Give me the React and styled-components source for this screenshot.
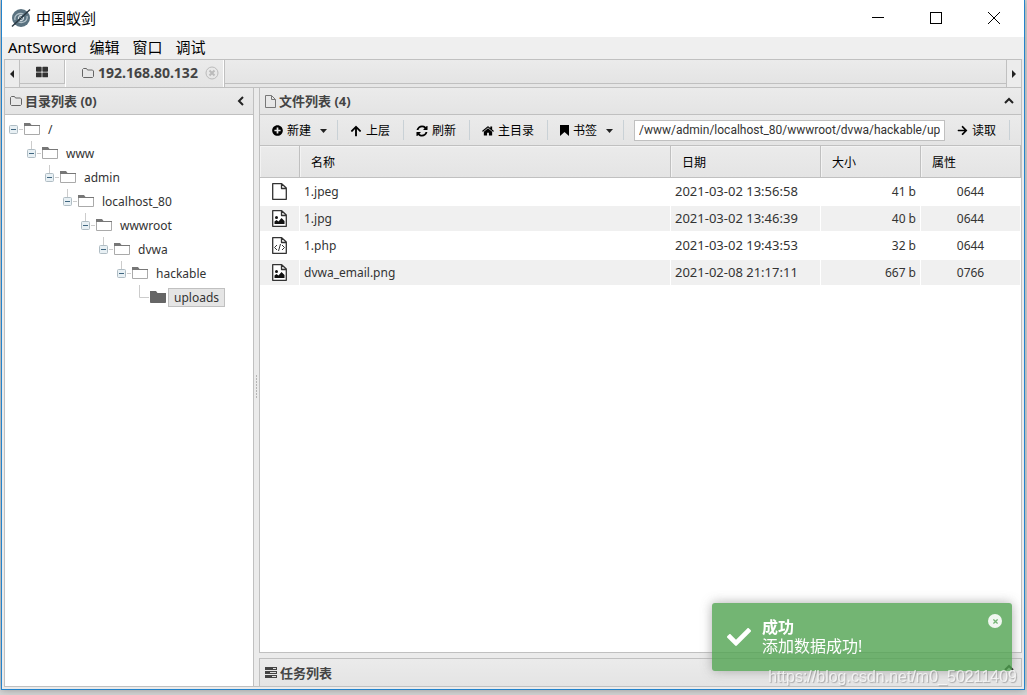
import React, { useState } from 'react';
import styled, { createGlobalStyle, css } from 'styled-components';
import {
  FaThLarge as GridIcon,
  FaPlusCircle as AddIcon,
  FaArrowUp as UpIcon,
  FaArrowRight as GoIcon,
  FaCheck as CheckIcon,
  FaTimes as TimesIcon,
} from 'react-icons/fa';

const line = '#c0c0c0';
const chrome = 'linear-gradient(#ebebeb, #e4e4e4)';
const uiFont = '"Noto Sans", "Noto Sans CJK SC", sans-serif';

const GlobalStyle = createGlobalStyle`
  * { box-sizing: border-box; }

  body {
    margin: 0;
    background: #d6d6d6;
    color: #333;
    font: 12px/16px ${uiFont};
  }

  button, input {
    font: inherit;
    color: inherit;
  }

  button {
    border: 0;
    padding: 0;
    background: none;
  }

  svg { display: block; flex: none; }
`;

const Window = styled.div`
  display: flex;
  flex-direction: column;
  height: calc(100vh - 5px);
  margin: 0 2px 5px 1px;
  border: 1px solid #2383cc;
  border-top: 0;
  background: #ebebeb;
  box-shadow: 0 0 8px rgba(0,0,0,.3);
`;

const TitleBar = styled.header`
  display: flex;
  align-items: center;
  height: 37px;
  padding: 0 1px 2px 9px;
  background: #fff;
  color: #000;
`;

const Title = styled.h1`
  flex: 1;
  margin: 0 0 0 5px;
  font-size: 15px;
  font-weight: 400;
  line-height: 20px;
`;

const WindowButton = styled.button`
  display: flex;
  justify-content: center;
  align-items: center;
  width: 58px;
  height: 35px;
`;

const MenuBar = styled.nav`
  display: flex;
  gap: 13px;
  height: 22px;
  padding: 0 6px 2px;
  background: #efefef;
`;

const MenuButton = styled.button`
  font-size: 15px;
  line-height: 20px;
  color: #000;
`;

const Workspace = styled.div`
  flex: 1;
  min-height: 0;
  display: flex;
  flex-direction: column;
  padding: 0 2px 2px;
`;

const TabBar = styled.div`
  display: flex;
  height: 28px;
  border: 1px solid ${line};
  border-bottom: 0;
  background: #e6e6e6;
`;

const TabArrow = styled.button`
  display: flex;
  justify-content: center;
  align-items: center;
  width: 15px;
  background: #ececec;
  border: 0 solid ${line};
  border-right-width: ${props => props.$side === 'left' ? '1px' : 0};
  border-left-width: ${props => props.$side === 'right' ? '1px' : 0};
`;

const Tabs = styled.div`
  flex: 1;
  display: flex;
`;

const TabFiller = styled.div`
  flex: 1;
  height: 24px;
  border-bottom: 1px solid ${line};
  background: ${chrome};
`;

const HomeTab = styled.button`
  display: flex;
  justify-content: center;
  align-items: center;
  width: 45px;
  height: 24px;
  border: solid ${line};
  border-width: 0 1px 1px 0;
  background: ${chrome};
`;

const ActiveTab = styled.div`
  display: flex;
  align-items: center;
  height: 27px;
  padding: 0 5px 2px 16px;
  border-left: 1px solid #fff;
  border-right: 1px solid ${line};
  box-shadow: inset -1px 0 #fff;
  background: ${chrome};
`;

const TabTitle = styled.button`
  display: flex;
  align-items: center;
  gap: 4px;
  color: #444;
  font-size: 14px;
  font-weight: 700;
`;

const TabClose = styled.button`
  margin-left: 7px;
`;

const Panes = styled.main`
  flex: 1;
  min-height: 0;
  display: grid;
  grid-template-columns: 250px 5px minmax(0, 1fr);
`;

const Panel = styled.section`
  display: flex;
  flex-direction: column;
  min-height: 0;
  flex: ${props => props.$grow ? '1' : 'none'};
  border: 1px solid ${line};
  background: #fff;
`;

const Splitter = styled.div`
  display: flex;
  justify-content: center;
  align-items: center;
  border: solid ${line};
  border-width: 1px 0;
`;

const Grip = styled.div`
  width: 1px;
  height: 24px;
  background: repeating-linear-gradient(#b5b5b5 0 2px, transparent 2px 3px);
`;

const RightColumn = styled.div`
  display: flex;
  flex-direction: column;
  gap: 5px;
  min-height: 0;
`;

const PanelHeader = styled.header`
  display: flex;
  align-items: center;
  gap: 3px;
  height: 27px;
  padding: 0 5px;
  border-bottom: ${props => props.$last ? 0 : '1px'} solid ${line};
  background: ${chrome};
`;

const PanelTitle = styled.h2`
  flex: 1;
  margin: 0;
  color: #444;
  font-size: 13px;
  line-height: 18px;
`;

const CollapseButton = styled.button`
  padding: 2px;
  align-self: ${props => props.$low ? 'flex-start' : 'center'};
`;

const TreeList = styled.ul`
  list-style: none;
  margin: 0;
  padding: 2px 0 0 4px;
`;

const TreeChildren = styled(TreeList)`
  padding: 0 0 0 18px;
`;

const TreeRow = styled.div`
  display: flex;
  align-items: center;
  height: 24px;
`;

const Toggle = styled.button`
  display: flex;
`;

const NodeLabel = styled.button`
  height: 19px;
  margin-left: 2px;
  padding: 1px 5px 0;
  border: 1px solid transparent;

  ${props => props.$selected && css`
    border-color: ${line};
    background: #e5e5e5;
  `}
`;

const Toolbar = styled.div`
  display: flex;
  align-items: center;
  height: 31px;
  padding-right: 11px;
  border-bottom: 1px solid ${line};
  background: ${chrome};
`;

const ToolButton = styled.button`
  display: flex;
  align-items: center;
  gap: 4px;
  height: 19px;
  padding: 1px 13px 0 12px;
  color: #000;

  svg:nth-of-type(2) {
    margin: 0 -3px 0 5px;
  }
`;

const Divider = styled.div`
  width: 1px;
  height: 20px;
  background: #c9d1d6;
`;

const PathInput = styled.input`
  flex: 1;
  min-width: 0;
  height: 21px;
  margin-left: 10px;
  padding: 0 4px;
  border: 1px solid ${line};
  border-radius: 0;
  background: #fff;
  font-family: Roboto, "Noto Sans CJK SC", sans-serif;
`;

const FileTable = styled.table`
  width: 100%;
  table-layout: fixed;
  border-spacing: 0;
`;

const HeadCell = styled.th`
  height: 32px;
  padding: 2px 11px 0;
  border: solid ${line};
  border-width: 0 1px 1px 0;
  box-shadow: inset 1px 1px #f3f3f3;
  background: ${chrome};
  color: #000;
  font-weight: 400;
  text-align: left;
`;

const FileRow = styled.tr`
  background: ${props => props.$odd ? '#f0f0f0' : '#fff'};
`;

const Cell = styled.td`
  height: 27px;
  padding: 0 4px;
  border: solid #fff;
  border-width: 1px 1px 1px 0;
  text-align: ${props => props.$align || 'left'};

  svg { margin: 0 auto; }
`;

const DateCell = styled(Cell)`
  padding-bottom: 2px;
  font-size: 13px;
`;

const Toast = styled.div`
  position: fixed;
  right: 15px;
  bottom: 24px;
  display: flex;
  align-items: flex-start;
  width: 300px;
  padding: 15px 10px 15px 15px;
  border-radius: 3px;
  background: #51a351;
  color: #fff;
  font-size: 16px;
  line-height: 19px;
  opacity: .8;
  box-shadow: 0 0 12px #999;
`;

const ToastIcon = styled.div`
  padding: 7px 11px 0 0;
`;

const ToastText = styled.div`
  flex: 1;
`;

const ToastTitle = styled.div`
  font-weight: 700;
`;

const ToastClose = styled.button`
  display: flex;
  justify-content: center;
  align-items: center;
  width: 14px;
  height: 14px;
  margin-top: -4px;
  border-radius: 50%;
  background: rgba(255,255,255,.9);
  color: #51a351;
`;

const Watermark = styled.div`
  position: fixed;
  right: 10px;
  bottom: 9px;
  color: rgba(255,255,255,.7);
  font: 16px/18px "Liberation Sans", sans-serif;
  text-shadow: 1px 1px 1px rgba(0,0,0,.25);
`;

const Logo = () => (
  <svg width="20" height="20" viewBox="0 0 20 20">
    <circle cx="10" cy="10" r="9" fill="#5a7280" />
    <path d="M4 12C3 7 8 4.500 12.500 6M16 8C17 13 12 15.500 7.500 14" fill="none" stroke="#b4c2c9" strokeWidth="1.300" />
    <path d="M7.500 11C7 8.500 9 7 11 7.500M12.500 9C13 11.500 11 13 9 12.500" fill="none" stroke="#d3dce0" strokeWidth="1.200" />
    <circle cx="10" cy="10" r="1.200" fill="#d3dce0" />
    <path d="M1 18.500L19 1.500" stroke="#293740" strokeWidth="1.400" />
  </svg>
);

const SmallFolder = () => (
  <svg width="12" height="12" viewBox="0 0 12 12" fill="none" stroke="#666">
    <path d="M.5 9.500v-7l1-1h3l1 1.500h5l1 1v5.500l-1 1h-9z" />
  </svg>
);

const SmallFile = () => (
  <svg width="11" height="13" viewBox="0 0 11 13" fill="none" stroke="#777">
    <path d="M.5.500h6l4 4v8H.5zM6.500.500v4h4" />
  </svg>
);

const TreeFolder = ({ filled }) => (
  <svg width="16" height="14" viewBox="0 0 16 14">
    <path d="M.5 3.500h15v9H.5z" fill={filled ? '#666' : '#fff'} stroke={filled ? '#666' : '#aaa'} />
    <path d="M0 4V1h6l1.500 2H16v1z" fill={filled ? '#666' : '#777'} />
  </svg>
);

const Toggler = ({ child }) => (
  <svg width="15" height="24" viewBox="0 0 15 24">
    {child && <path d="M4.500 0v8" stroke="#ccc" />}
    <path d="M10 12.500h4" stroke="#ccc" />
    <rect x="0.500" y="8.500" width="8" height="8" rx="1" fill="#e8f0f4" stroke="#b0bdc4" />
    <path d="M2 12.500h5" stroke="#3f6680" />
  </svg>
);

const LeafLine = () => (
  <svg width="15" height="24" viewBox="0 0 15 24">
    <path d="M4.500 0v12.500h9.500" fill="none" stroke="#ccc" />
  </svg>
);

const Chevron = ({ d }) => (
  <svg width="10" height="10" viewBox="0 0 10 10" fill="none" stroke="#222" strokeWidth="2">
    <path d={d} />
  </svg>
);

const Caret = () => (
  <svg width="7" height="4" viewBox="0 0 7 4"><path d="M0 0h7L3.500 4z" fill="#222" /></svg>
);

const BookmarkIcon = () => (
  <svg width="9" height="11" viewBox="0 0 9 11"><path d="M0 0h9v11L4.500 7 0 11z" /></svg>
);

const RefreshIcon = () => (
  <svg width="12" height="12" viewBox="64 64 1664 1664">
    <path d="M1639 1056q0 5-1 7-64 268-268 434.500t-478 166.500q-146 0-282.500-55t-243.500-157l-129 129q-19 19-45 19t-45-19-19-45v-448q0-26 19-45t45-19h448q26 0 45 19t19 45-19 45l-137 137q71 66 161 102t187 36q134 0 250-65t186-179q11-17 53-117 8-23 30-23h192q13 0 22.500 9.500t9.500 22.500zm25-800v448q0 26-19 45t-45 19h-448q-26 0-45-19t-19-45 19-45l138-138q-148-137-349-137-134 0-250 65t-186 179q-11 17-53 117-8 23-30 23h-199q-13 0-22.500-9.500t-9.500-22.500v-7q65-268 270-434.500t480-166.500q146 0 284 55.500t245 156.500l130-129q19-19 45-19t45 19 19 45z" />
  </svg>
);

const HomeIcon = () => (
  <svg width="12" height="12" viewBox="64 64 1664 1664">
    <path d="M1472 992v480q0 26-19 45t-45 19h-384v-384h-256v384h-384q-26 0-45-19t-19-45v-480q0-1 .5-3t.5-3l575-474 575 474q1 2 1 6zm223-69l-62 74q-8 9-21 11h-3q-13 0-21-7l-692-577-692 577q-12 8-24 7-13-2-21-11l-62-74q-8-10-7-23.500t11-21.500l719-599q32-26 76-26t76 26l244 204v-195q0-14 9-23t23-9h192q14 0 23 9t9 23v408l219 182q10 8 11 21.500t-7 23.500z" />
  </svg>
);

const TasksIcon = () => (
  <svg width="12" height="11" viewBox="0 0 12 11">
    <path d="M0 0h12v3H0zM0 4h12v3H0zM0 8h12v3H0z" fill="#444" />
    <path d="M8 1h3v1H8zM5 5h6v1H5zM7 9h4v1H7z" fill="#ddd" />
  </svg>
);

const fileMarks = {
  image: (
    <>
      <circle cx="4.500" cy="7.500" r="1.500" fill="#111" />
      <path d="M2.500 14v-2.500l2-1.500 2 1.500L9.500 8l3 3v3z" fill="#111" />
    </>
  ),
  code: <path d="M5 8l-2.500 2.500L5 13M10 8l2.500 2.500L10 13M8.500 7l-2 7" fill="none" stroke="#333" />,
};

const FileIcon = ({ kind }) => (
  <svg width="15" height="17" viewBox="0 0 15 17">
    <path d="M.7.700h9L14.300 5v11.300H.7zM9.500.700V5.500h4.800" fill="#fff" stroke="#333" strokeWidth="1.300" strokeLinejoin="round" />
    {fileMarks[kind]}
  </svg>
);

const folders = ['/', 'www', 'admin', 'localhost_80', 'wwwroot', 'dvwa', 'hackable', 'uploads'];

const files = [
  { name: '1.jpeg', date: '2021-03-02 13:56:58', size: '41 b', mode: '0644', kind: 'blank' },
  { name: '1.jpg', date: '2021-03-02 13:46:39', size: '40 b', mode: '0644', kind: 'image' },
  { name: '1.php', date: '2021-03-02 19:43:53', size: '32 b', mode: '0644', kind: 'code' },
  { name: 'dvwa_email.png', date: '2021-02-08 21:17:11', size: '667 b', mode: '0766', kind: 'image' },
];

const TreeNode = ({ depth }) => {
  const leaf = depth === folders.length - 1;

  return (
    <li>
      <TreeRow>
        {
          leaf
            ? <LeafLine />
            : <Toggle aria-label="collapse"><Toggler child={depth > 0} /></Toggle>
        }
        <TreeFolder filled={leaf} />
        <NodeLabel $selected={leaf}>{folders[depth]}</NodeLabel>
      </TreeRow>
      {!leaf && <TreeChildren><TreeNode depth={depth + 1} /></TreeChildren>}
    </li>
  );
};

const App = () => {
  const [path, setPath] = useState('/www/admin/localhost_80/wwwroot/dvwa/hackable/uploads/');
  const [toastOpen, setToastOpen] = useState(true);

  return (
    <>
      <GlobalStyle />
      <Window>
        <TitleBar>
          <Logo />
          <Title>中国蚁剑</Title>
          <WindowButton aria-label="minimize">
            <svg width="12" height="12"><path d="M0 5.500h12" stroke="#000" /></svg>
          </WindowButton>
          <WindowButton aria-label="maximize">
            <svg width="12" height="12"><rect x="0.500" y="0.500" width="11" height="11" fill="none" stroke="#000" /></svg>
          </WindowButton>
          <WindowButton aria-label="close">
            <svg width="12" height="12"><path d="M0 0l12 12M12 0L0 12" stroke="#000" /></svg>
          </WindowButton>
        </TitleBar>
        <MenuBar>
          {['AntSword', '编辑', '窗口', '调试'].map(item => <MenuButton key={item}>{item}</MenuButton>)}
        </MenuBar>
        <Workspace>
          <TabBar>
            <TabArrow $side="left" aria-label="previous">
              <svg width="4" height="8"><path d="M4 0v8L0 4z" fill="#222" /></svg>
            </TabArrow>
            <Tabs>
              <HomeTab aria-label="home"><GridIcon size={12} /></HomeTab>
              <ActiveTab>
                <TabTitle><SmallFolder />192.168.80.132</TabTitle>
                <TabClose aria-label="close tab">
                  <svg width="14" height="14" viewBox="0 0 14 14" fill="none" stroke="#bbb">
                    <circle cx="7" cy="7" r="6" />
                    <path d="M4.500 4.500l5 5M9.500 4.500l-5 5" strokeWidth="2" />
                  </svg>
                </TabClose>
              </ActiveTab>
              <TabFiller />
            </Tabs>
            <TabArrow $side="right" aria-label="next">
              <svg width="4" height="8"><path d="M0 0v8l4-4z" fill="#222" /></svg>
            </TabArrow>
          </TabBar>
          <Panes>
            <Panel>
              <PanelHeader>
                <SmallFolder />
                <PanelTitle>目录列表 (0)</PanelTitle>
                <CollapseButton aria-label="collapse"><Chevron d="M7 1L3 5l4 4" /></CollapseButton>
              </PanelHeader>
              <TreeList><TreeNode depth={0} /></TreeList>
            </Panel>
            <Splitter><Grip /></Splitter>
            <RightColumn>
              <Panel $grow>
                <PanelHeader>
                  <SmallFile />
                  <PanelTitle>文件列表 (4)</PanelTitle>
                  <CollapseButton aria-label="collapse"><Chevron d="M1 7l4-4 4 4" /></CollapseButton>
                </PanelHeader>
                <Toolbar>
                  <ToolButton><AddIcon size={11} />新建<Caret /></ToolButton>
                  <Divider />
                  <ToolButton><UpIcon size={12} />上层</ToolButton>
                  <Divider />
                  <ToolButton><RefreshIcon />刷新</ToolButton>
                  <Divider />
                  <ToolButton><HomeIcon />主目录</ToolButton>
                  <Divider />
                  <ToolButton><BookmarkIcon />书签<Caret /></ToolButton>
                  <Divider />
                  <PathInput aria-label="path" value={path} onChange={e => setPath(e.target.value)} />
                  <ToolButton><GoIcon size={11} />读取</ToolButton>
                  <Divider />
                </Toolbar>
                <FileTable>
                  <colgroup>
                    <col width="40" />
                    <col />
                    <col width="150" />
                    <col width="100" />
                    <col width="100" />
                  </colgroup>
                  <thead>
                    <tr>
                      <HeadCell />
                      <HeadCell>名称</HeadCell>
                      <HeadCell>日期</HeadCell>
                      <HeadCell>大小</HeadCell>
                      <HeadCell>属性</HeadCell>
                    </tr>
                  </thead>
                  <tbody>
                    {
                      files.map((file, i) => (
                        <FileRow key={file.name} $odd={i % 2 === 1}>
                          <Cell><FileIcon kind={file.kind} /></Cell>
                          <Cell>{file.name}</Cell>
                          <DateCell>{file.date}</DateCell>
                          <Cell $align="right">{file.size}</Cell>
                          <Cell $align="center">{file.mode}</Cell>
                        </FileRow>
                      ))
                    }
                  </tbody>
                </FileTable>
              </Panel>
              <Panel>
                <PanelHeader $last>
                  <TasksIcon />
                  <PanelTitle>任务列表</PanelTitle>
                  <CollapseButton $low aria-label="expand"><Chevron d="M1 9l4-4 4 4" /></CollapseButton>
                </PanelHeader>
              </Panel>
            </RightColumn>
          </Panes>
        </Workspace>
      </Window>
      {
        toastOpen &&
        <Toast role="status">
          <ToastIcon><CheckIcon size={24} /></ToastIcon>
          <ToastText>
            <ToastTitle>成功</ToastTitle>
            添加数据成功!
          </ToastText>
          <ToastClose aria-label="dismiss" onClick={() => setToastOpen(false)}><TimesIcon size={7} /></ToastClose>
        </Toast>
      }
      <Watermark>https://blog.csdn.net/m0_50211409</Watermark>
    </>
  );
};

export default App;
